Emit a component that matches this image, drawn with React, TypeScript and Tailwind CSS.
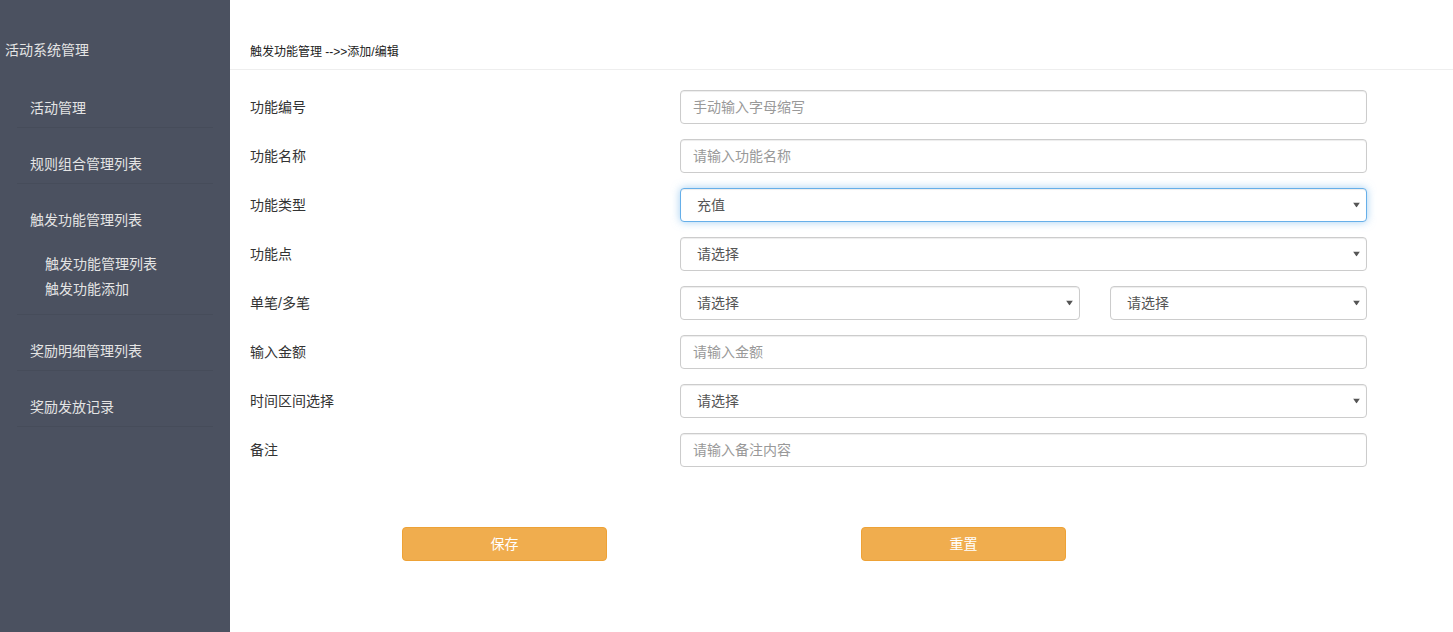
import { useState } from "react";

const FONT = '"Liberation Sans", "Noto Sans CJK SC", sans-serif';

function Caret() {
  return (
    <svg
      className="pointer-events-none absolute right-[7px] top-1/2 -translate-y-1/2"
      width="7"
      height="5"
      viewBox="0 0 7 5"
    >
      <path d="M0 0h7L3.5 5z" fill="#555" />
    </svg>
  );
}

function Select({
  value,
  options,
  focused,
  className = "",
}: {
  value: string;
  options: string[];
  focused?: boolean;
  className?: string;
}) {
  const [v, setV] = useState(value);
  return (
    <div className={`relative h-[34px] ${className}`}>
      <select
        value={v}
        onChange={(e) => setV(e.target.value)}
        className={`h-full w-full appearance-none rounded-[4px] border bg-white pl-[16px] pr-6 text-[14px] text-[#555] outline-none ${
          focused
            ? "border-[#66afe9] shadow-[inset_0_1px_1px_rgba(0,0,0,0.075),0_0_8px_rgba(102,175,233,0.6)]"
            : "border-[#ccc] shadow-[inset_0_1px_1px_rgba(0,0,0,0.075)]"
        }`}
      >
        {options.map((o) => (
          <option key={o}>{o}</option>
        ))}
      </select>
      <Caret />
    </div>
  );
}

function TextInput({ placeholder }: { placeholder: string }) {
  return (
    <input
      placeholder={placeholder}
      className="h-[34px] w-full rounded-[4px] border border-[#ccc] bg-white px-[12px] text-[14px] text-[#555] shadow-[inset_0_1px_1px_rgba(0,0,0,0.075)] outline-none placeholder:text-[#999]"
    />
  );
}

function Row({ label, children }: { label: string; children: React.ReactNode }) {
  return (
    <div className="mb-[15px] flex h-[34px] items-center">
      <label className="w-[430px] shrink-0 text-[14px] text-[#333]">{label}</label>
      <div className="w-[687px]">{children}</div>
    </div>
  );
}

const navItems = ["活动管理", "规则组合管理列表"];

export default function App() {
  return (
    <div className="flex min-h-screen bg-white" style={{ fontFamily: FONT }}>
      {/* Sidebar */}
      <aside className="w-[230px] shrink-0 bg-[#4b5160] text-[14px] text-[#e4e4e4]">
        <div className="pl-[5px] pt-[42px] leading-4">活动系统管理</div>
        <ul className="mt-[14px]">
          {navItems.map((n) => (
            <li key={n} className="mx-[17px] h-[56px] border-b border-[#464c5a] pl-[13px] pt-[28px] leading-4">
              {n}
            </li>
          ))}
          <li className="mx-[17px] border-b border-[#464c5a] pb-[12px] pl-[13px] pt-[28px] leading-4">
            触发功能管理列表
            <ul className="mt-[24px] pl-[15px] leading-[25px]">
              <li>触发功能管理列表</li>
              <li>触发功能添加</li>
            </ul>
          </li>
          {["奖励明细管理列表", "奖励发放记录"].map((n) => (
            <li key={n} className="mx-[17px] h-[56px] border-b border-[#464c5a] pl-[13px] pt-[28px] leading-4">
              {n}
            </li>
          ))}
        </ul>
      </aside>

      {/* Main */}
      <main className="flex-1">
        <div className="flex h-[70px] items-end border-b border-[#eee] pb-[9px] pl-[20px] text-[12px] leading-4 text-[#222]">
          触发功能管理 --&gt;&gt;添加/编辑
        </div>

        <form className="pl-[20px] pt-[20px]" onSubmit={(e) => e.preventDefault()}>
          <Row label="功能编号">
            <TextInput placeholder="手动输入字母缩写" />
          </Row>
          <Row label="功能名称">
            <TextInput placeholder="请输入功能名称" />
          </Row>
          <Row label="功能类型">
            <Select value="充值" options={["充值", "消费"]} focused />
          </Row>
          <Row label="功能点">
            <Select value="请选择" options={["请选择"]} />
          </Row>
          <Row label="单笔/多笔">
            <div className="flex gap-[30px]">
              <Select value="请选择" options={["请选择", "单笔", "多笔"]} className="w-[400px]" />
              <Select value="请选择" options={["请选择"]} className="w-[257px]" />
            </div>
          </Row>
          <Row label="输入金额">
            <TextInput placeholder="请输入金额" />
          </Row>
          <Row label="时间区间选择">
            <Select value="请选择" options={["请选择"]} />
          </Row>
          <Row label="备注">
            <TextInput placeholder="请输入备注内容" />
          </Row>

          <div className="mt-[60px] flex pl-[152px]">
            <button className="h-[34px] w-[205px] rounded-[4px] border border-[#eea236] bg-[#f0ad4e] text-[14px] text-white">
              保存
            </button>
            <button
              type="reset"
              className="ml-[254px] h-[34px] w-[205px] rounded-[4px] border border-[#eea236] bg-[#f0ad4e] text-[14px] text-white"
            >
              重置
            </button>
          </div>
        </form>
      </main>
    </div>
  );
}
